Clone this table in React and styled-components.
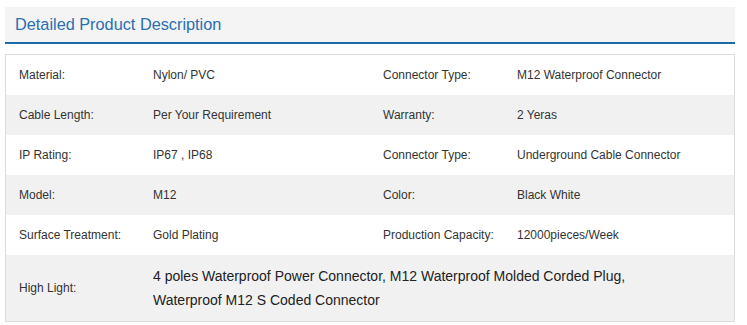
import React from 'react';
import styled, { createGlobalStyle } from 'styled-components';

const GlobalStyle = createGlobalStyle`
  html, body {
    margin: 0;
    padding: 0;
    background: #ffffff;
  }
  body {
    font-family: "Liberation Sans", Arial, Helvetica, sans-serif;
  }
`;

const Wrapper = styled.div`
  width: 730px;
  padding: 7px 0 0 5px;
`;

const Heading = styled.div`
  height: 35px;
  display: flex;
  align-items: center;
  padding-left: 10px;
  background: #f4f4f4;
  border-bottom: 2px solid #1e6aa8;
  h2 {
    margin: 0;
    font-size: 16.3px;
    font-weight: normal;
    color: #2a6fb0;
  }
`;

const Table = styled.div`
  margin-top: 10px;
  border: 1px solid #dcdcdc;
  display: grid;
  grid-template-columns: 134px 230px 134px 1fr;
`;

const Row = styled.div`
  display: contents;
  & > div {
    background: ${(p) => (p.$shaded ? '#f1f1f1' : '#ffffff')};
    min-height: ${(p) => (p.$tall ? '66px' : '40px')};
  }
`;

const Cell = styled.div`
  display: flex;
  align-items: center;
  padding-left: 13px;
  font-size: 12px;
  color: #333333;
  grid-column: ${(p) => p.$span || 'auto'};
`;

const HighLight = styled(Cell)`
  font-size: 14px;
  line-height: 24px;
  color: #222222;
`;

const rows = [
  ['Material:', 'Nylon/ PVC', 'Connector Type:', 'M12 Waterproof Connector'],
  ['Cable Length:', 'Per Your Requirement', 'Warranty:', '2 Yeras'],
  ['IP Rating:', 'IP67 , IP68', 'Connector Type:', 'Underground Cable Connector'],
  ['Model:', 'M12', 'Color:', 'Black White'],
  ['Surface Treatment:', 'Gold Plating', 'Production Capacity:', '12000pieces/Week'],
];

export default function App() {
  return (
    <>
      <GlobalStyle />
      <Wrapper>
        <Heading>
          <h2>Detailed Product Description</h2>
        </Heading>
        <Table>
          {rows.map((r, i) => (
            <Row key={i} $shaded={i % 2 === 1}>
              {r.map((c, j) => (
                <Cell key={j}>{c}</Cell>
              ))}
            </Row>
          ))}
          <Row $shaded $tall>
            <Cell>High Light:</Cell>
            <HighLight $span="2 / 5">
              <div>
                4 poles Waterproof Power Connector, M12 Waterproof Molded Corded Plug,
                <br />
                Waterproof M12 S Coded Connector
              </div>
            </HighLight>
          </Row>
        </Table>
      </Wrapper>
    </>
  );
}
